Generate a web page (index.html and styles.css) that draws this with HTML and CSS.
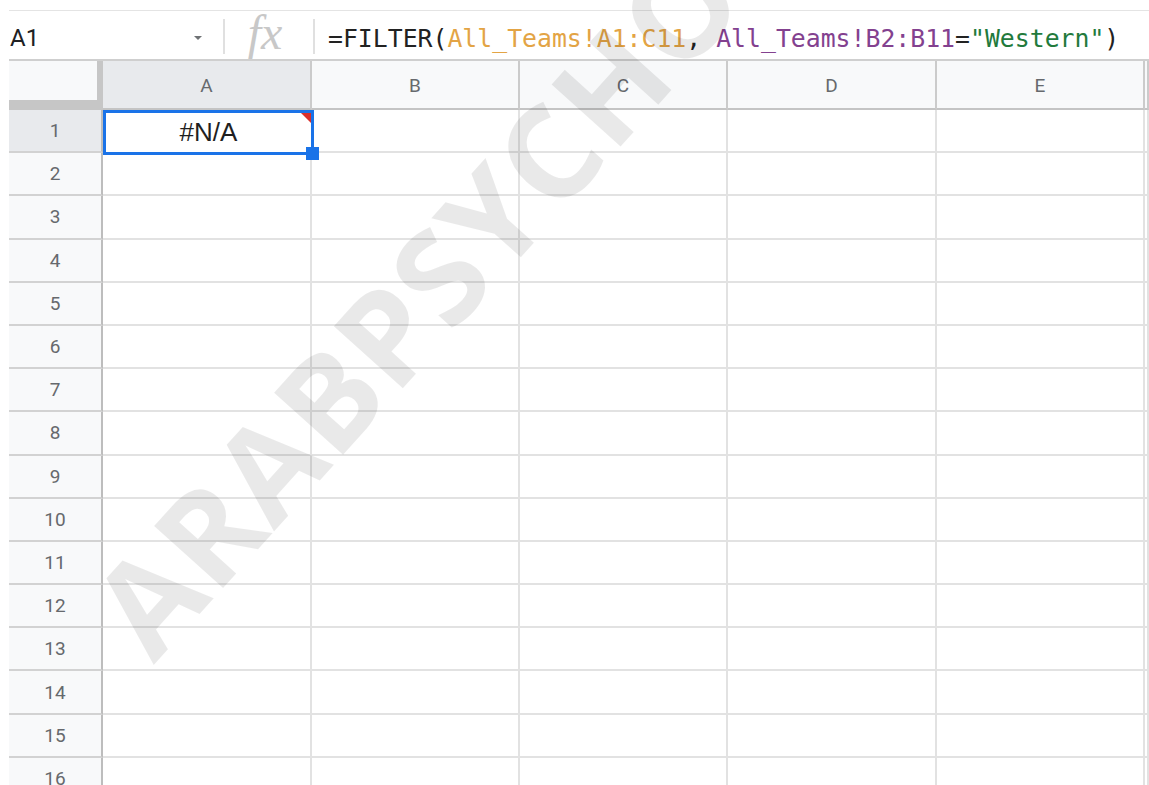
FILE: index.html
```html
<!DOCTYPE html>
<html lang="en">
<head>
<meta charset="utf-8">
<title>Sheet</title>
<link rel="stylesheet" href="styles.css">
</head>
<body>
<div class="app">
  <div class="formula-bar">
    <div class="name-box">
      <span class="cell-ref">A1</span>
      <span class="caret"></span>
    </div>
    <div class="divider"></div>
    <div class="fx-box"><span class="fx">fx</span></div>
    <div class="divider"></div>
    <div class="formula"><span class="op">=FILTER(</span><span class="ref-a">All_Teams!A1:C11</span><span class="op">, </span><span class="ref-b">All_Teams!B2:B11</span><span class="op">=</span><span class="str">"Western"</span><span class="op">)</span></div>
  </div>

  <div class="grid">
    <div class="corner"></div>
    <div class="col-head selected">A</div>
    <div class="col-head">B</div>
    <div class="col-head">C</div>
    <div class="col-head">D</div>
    <div class="col-head">E</div>
    <div class="col-head"></div>

    <div class="row-head selected">1</div>
    <div class="cell active">#N/A<span class="err-flag"></span><span class="fill-handle"></span></div>
    <div class="cell"></div><div class="cell"></div><div class="cell"></div><div class="cell"></div><div class="cell"></div>

    <div class="row-head">2</div><div class="cell"></div><div class="cell"></div><div class="cell"></div><div class="cell"></div><div class="cell"></div><div class="cell"></div>
    <div class="row-head">3</div><div class="cell"></div><div class="cell"></div><div class="cell"></div><div class="cell"></div><div class="cell"></div><div class="cell"></div>
    <div class="row-head">4</div><div class="cell"></div><div class="cell"></div><div class="cell"></div><div class="cell"></div><div class="cell"></div><div class="cell"></div>
    <div class="row-head">5</div><div class="cell"></div><div class="cell"></div><div class="cell"></div><div class="cell"></div><div class="cell"></div><div class="cell"></div>
    <div class="row-head">6</div><div class="cell"></div><div class="cell"></div><div class="cell"></div><div class="cell"></div><div class="cell"></div><div class="cell"></div>
    <div class="row-head">7</div><div class="cell"></div><div class="cell"></div><div class="cell"></div><div class="cell"></div><div class="cell"></div><div class="cell"></div>
    <div class="row-head">8</div><div class="cell"></div><div class="cell"></div><div class="cell"></div><div class="cell"></div><div class="cell"></div><div class="cell"></div>
    <div class="row-head">9</div><div class="cell"></div><div class="cell"></div><div class="cell"></div><div class="cell"></div><div class="cell"></div><div class="cell"></div>
    <div class="row-head">10</div><div class="cell"></div><div class="cell"></div><div class="cell"></div><div class="cell"></div><div class="cell"></div><div class="cell"></div>
    <div class="row-head">11</div><div class="cell"></div><div class="cell"></div><div class="cell"></div><div class="cell"></div><div class="cell"></div><div class="cell"></div>
    <div class="row-head">12</div><div class="cell"></div><div class="cell"></div><div class="cell"></div><div class="cell"></div><div class="cell"></div><div class="cell"></div>
    <div class="row-head">13</div><div class="cell"></div><div class="cell"></div><div class="cell"></div><div class="cell"></div><div class="cell"></div><div class="cell"></div>
    <div class="row-head">14</div><div class="cell"></div><div class="cell"></div><div class="cell"></div><div class="cell"></div><div class="cell"></div><div class="cell"></div>
    <div class="row-head">15</div><div class="cell"></div><div class="cell"></div><div class="cell"></div><div class="cell"></div><div class="cell"></div><div class="cell"></div>
    <div class="row-head">16</div><div class="cell"></div><div class="cell"></div><div class="cell"></div><div class="cell"></div><div class="cell"></div><div class="cell"></div>
  </div>

  <div class="watermark">ARABPSYCHOLOGY</div>
</div>
</body>
</html>
```
FILE: styles.css
```css
html, body {
  margin: 0;
  height: 785px;
  overflow: hidden;
  background: #fff;
}

.app {
  position: relative;
  height: 775px;
  padding: 10px 0 0 9px;
  overflow: hidden;
  font-family: Roboto, "Liberation Sans", sans-serif;
}

/* ---------- formula bar ---------- */
.formula-bar {
  display: flex;
  align-items: center;
  height: 48px;
  border-top: 1px solid #e4e4e4;
  border-bottom: 2px solid #cfcfcf;
}

.name-box {
  display: flex;
  align-items: center;
  justify-content: space-between;
  width: 192px;
  padding: 0 21px 0 1px;
  flex: none;
}

.cell-ref {
  font-size: 24px;
  color: #202124;
  margin-top: 6px;
}

.caret {
  width: 0;
  height: 0;
  border-left: 4px solid transparent;
  border-right: 4px solid transparent;
  border-top: 4px solid #6f7275;
  margin-top: 6px;
}

.divider {
  width: 2px;
  height: 35px;
  background: #e0e0e0;
  flex: none;
  margin-top: 2px;
}

.fx-box {
  width: 88px;
  flex: none;
  display: flex;
  justify-content: center;
  align-items: center;
}

.fx {
  font-family: "Liberation Serif", serif;
  font-style: italic;
  font-size: 48px;
  line-height: 1;
  color: #c8c8c8;
  margin-left: -8px;
  margin-top: -4px;
}

.formula {
  padding-left: 13px;
  font-family: "DejaVu Sans Mono", monospace;
  font-size: 24.8px;
  white-space: nowrap;
  color: #222;
  margin-top: 7px;
}

.ref-a { color: #e3a445; }
.ref-b { color: #83418f; }
.str { color: #227a3c; }

/* ---------- grid ---------- */
.grid {
  display: grid;
  grid-template-columns: 94px 209px 208px 208px 209px 208px 1fr;
  grid-template-rows: 49px repeat(16, 43.2px);
}

.corner {
  background: #f8f9fa;
  border-right: 6px solid #c6c6c6;
  border-bottom: 10px solid #c6c6c6;
  box-sizing: border-box;
}

.col-head {
  background: #f8f9fa;
  border-right: 2px solid #cbcbcb;
  border-bottom: 2px solid #c4c4c4;
  box-sizing: border-box;
  display: flex;
  align-items: center;
  justify-content: center;
  font-size: 19px;
  color: #66696d;
  padding-top: 2px;
}

.col-head.selected,
.row-head.selected {
  background: #e8eaed;
}

.row-head {
  background: #f8f9fa;
  border-right: 2px solid #bdbdbd;
  border-bottom: 2px solid #d2d2d2;
  box-sizing: border-box;
  display: flex;
  align-items: center;
  justify-content: center;
  font-size: 19px;
  color: #66696d;
}

.cell {
  border-right: 2px solid #e2e2e2;
  border-bottom: 2px solid #e2e2e2;
  box-sizing: border-box;
}

.cell.active {
  position: relative;
  display: flex;
  align-items: center;
  justify-content: center;
  font-family: "Liberation Sans", Arial, sans-serif;
  font-size: 26px;
  color: #1f1f1f;
  border: 3px solid #1a73e8;
  margin: 0 -2px -2px 0;
  z-index: 1;
}

.err-flag {
  position: absolute;
  top: 0;
  right: 0;
  width: 0;
  height: 0;
  border-top: 10px solid #d9302c;
  border-left: 10px solid transparent;
}

.fill-handle {
  position: absolute;
  right: -8px;
  bottom: -8px;
  width: 13px;
  height: 13px;
  background: #1a73e8;
  box-sizing: border-box;
}

/* ---------- watermark ---------- */
.watermark {
  position: absolute;
  left: 165px;
  top: 545px;
  font-family: "Open Sans", "Liberation Sans", sans-serif;
  font-weight: 700;
  font-size: 130px;
  line-height: 1;
  letter-spacing: 2px;
  color: rgba(0, 0, 0, 0.085);
  white-space: nowrap;
  transform-origin: 0 100%;
  transform: rotate(-48deg);
  pointer-events: none;
  z-index: 2;
}
```
